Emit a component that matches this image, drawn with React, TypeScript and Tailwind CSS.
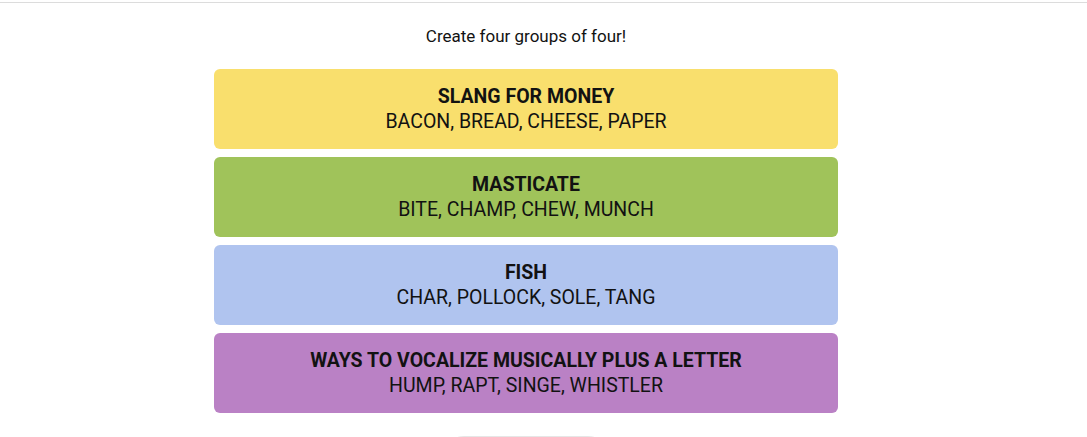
const groups = [
  { title: "SLANG FOR MONEY", words: "BACON, BREAD, CHEESE, PAPER", color: "bg-[#f9df6d]" },
  { title: "MASTICATE", words: "BITE, CHAMP, CHEW, MUNCH", color: "bg-[#a0c35a]" },
  { title: "FISH", words: "CHAR, POLLOCK, SOLE, TANG", color: "bg-[#b0c4ef]" },
  { title: "WAYS TO VOCALIZE MUSICALLY PLUS A LETTER", words: "HUMP, RAPT, SINGE, WHISTLER", color: "bg-[#ba81c5]" },
];

export default function App() {
  return (
    <div className="h-[437px] overflow-hidden bg-white font-['Roboto',sans-serif] text-[#121212]">
      <div className="h-[3px] border-b border-[#dcdcdc]" />
      <div className="pr-[35px]">
        <p className="mt-[23px] text-center text-[17px] leading-[20px]">Create four groups of four!</p>
        <div className="mx-auto mt-[23px] flex w-[624px] flex-col gap-2">
          {groups.map((g) => (
            <div key={g.title} className={`flex h-[80px] flex-col items-center justify-center rounded-[6px] ${g.color}`}>
              <div className="text-[19.5px] leading-[25px] font-bold">{g.title}</div>
              <div className="text-[19.5px] leading-[25px]">{g.words}</div>
            </div>
          ))}
        </div>
        <div className="mt-[23px] flex justify-center">
          <button aria-label="Back to puzzle" className="h-[48px] w-[172px] rounded-full border border-[#e6e6e6]" />
        </div>
      </div>
    </div>
  );
}
